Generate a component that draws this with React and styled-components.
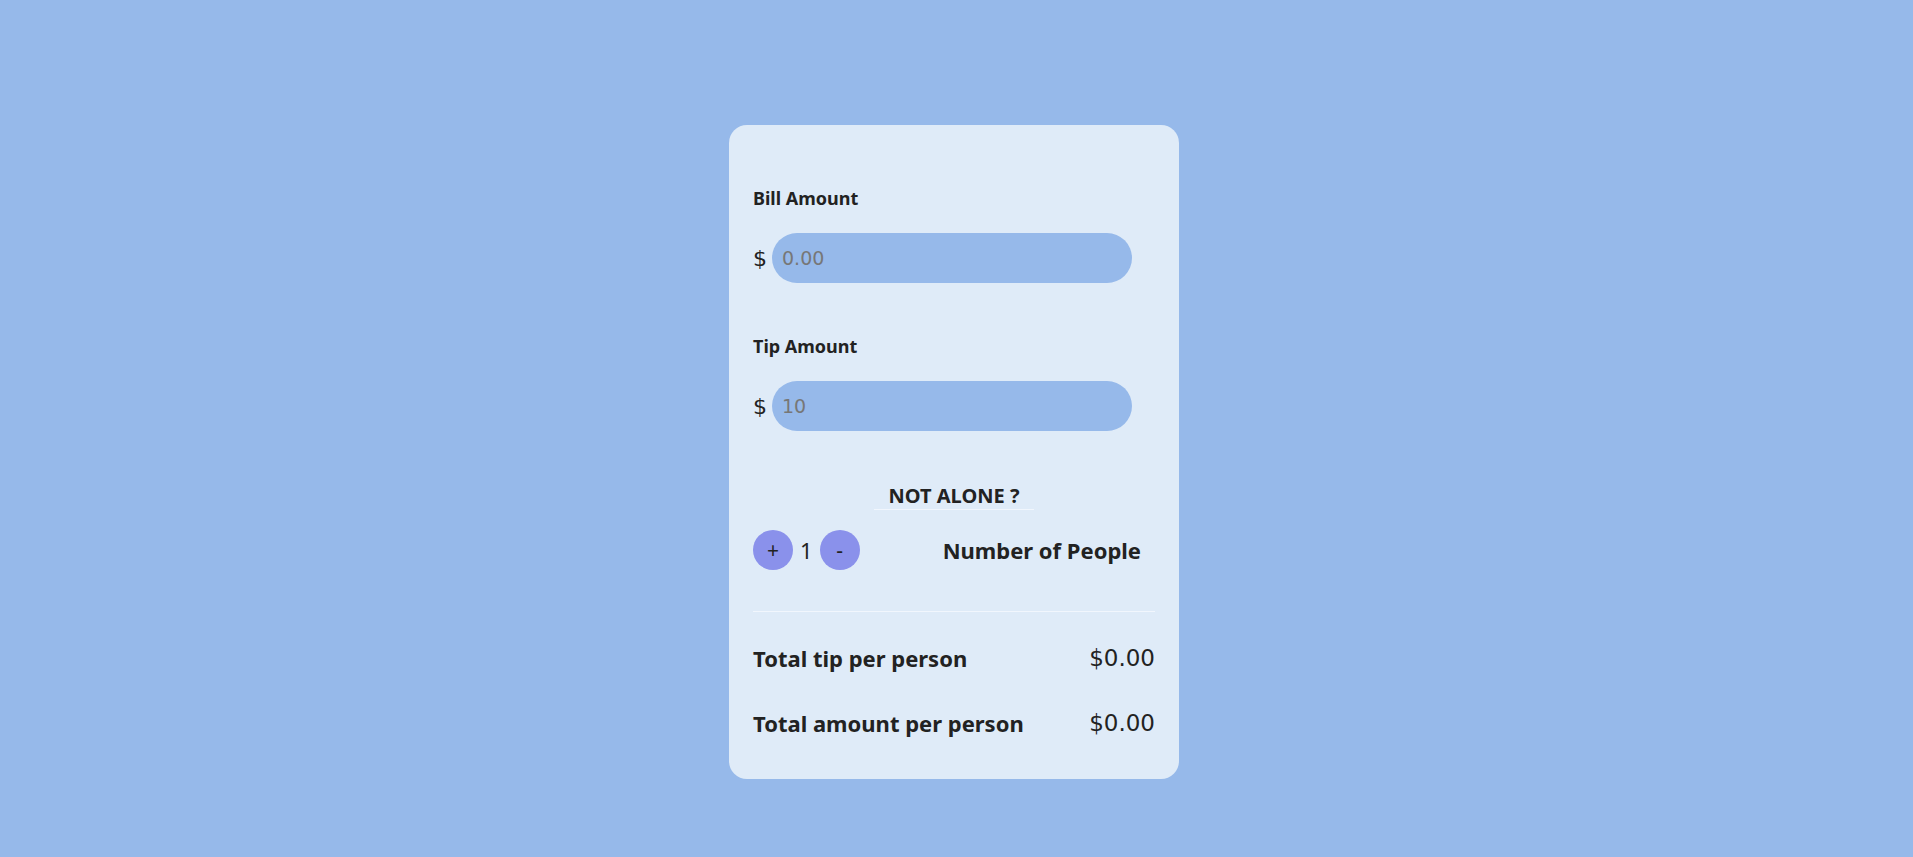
import { useState } from 'react';
import styled, { createGlobalStyle } from 'styled-components';

const GlobalStyle = createGlobalStyle`
  * {
    box-sizing: border-box;
  }

  html, body {
    margin: 0;
    padding: 0;
    min-height: 100%;
    background: #96b9ea;
    font-family: "Noto Sans", "Open Sans", sans-serif;
    color: #222;
  }
`;

// digits in the original render wider than the label font
const numberFont = `"DejaVu Sans", "Noto Sans", sans-serif`;

const Page = styled.main`
  min-height: 100vh;
  display: flex;
  justify-content: center;
  align-items: flex-start;
  padding: 125px 5px 0 0;
`;

const Card = styled.section`
  width: 450px;
  background: #dfebf8;
  border-radius: 18px;
  padding: 61px 24px 41px;
  display: flex;
  flex-direction: column;
`;

const Field = styled.div`
  display: flex;
  flex-direction: column;
  margin-bottom: 51px;
`;

const Label = styled.label`
  font-size: 18px;
  font-weight: 700;
  margin-bottom: 23px;
`;

const InputRow = styled.div`
  display: flex;
  align-items: center;
  gap: 5px;
`;

const Currency = styled.span`
  font-family: ${numberFont};
  font-size: 22px;
  width: 14px;
`;

const AmountInput = styled.input`
  width: 360px;
  height: 50px;
  border: none;
  outline: none;
  border-radius: 25px;
  background: #96b9ea;
  padding: 0 10px;
  font-family: ${numberFont};
  font-size: 19px;
  color: #222;

  &::placeholder {
    color: #777;
  }
`;

const SectionTitle = styled.h3`
  align-self: center;
  width: 160px;
  margin: 0 0 20px;
  text-align: center;
  font-size: 20px;
  font-weight: 700;
  border-bottom: 1px solid #f1f6fd;
`;

const PeopleRow = styled.div`
  display: flex;
  align-items: center;
  gap: 7px;
  padding-right: 14px;
  margin-bottom: 41px;
`;

const RoundButton = styled.button`
  width: 40px;
  height: 40px;
  border: none;
  border-radius: 50%;
  background: #8a91eb;
  color: #222;
  font-family: inherit;
  font-size: 21px;
  cursor: pointer;
  display: flex;
  align-items: center;
  justify-content: center;
  padding: 0;
`;

const Count = styled.span`
  font-size: 22px;
`;

const PeopleLabel = styled.span`
  margin-left: auto;
  font-size: 22px;
  font-weight: 700;
`;

const Divider = styled.hr`
  width: 100%;
  margin: 0 0 31px;
  border: none;
  border-top: 1px solid #f1f6fd;
`;

const TotalRow = styled.div`
  display: flex;
  justify-content: space-between;
  align-items: center;
  height: 30px;
  font-size: 22px;
  margin-bottom: ${({ $last }) => ($last ? '0' : '35px')};
`;

const TotalLabel = styled.span`
  font-weight: 700;
`;

const TotalValue = styled.span`
  font-family: ${numberFont};
  font-size: 23px;
  font-weight: 400;
`;

const App = () => {
  const [bill, setBill] = useState('');
  const [tip, setTip] = useState('');
  const [people, setPeople] = useState(1);

  const billNum = parseFloat(bill) || 0;
  const tipNum = parseFloat(tip) || 0;
  const tipPerPerson = billNum ? (billNum * tipNum) / 100 / people : 0;
  const totalPerPerson = billNum ? billNum / people + tipPerPerson : 0;

  return (
    <>
      <GlobalStyle />
      <Page>
        <Card>
          <Field>
            <Label htmlFor="bill">Bill Amount</Label>
            <InputRow>
              <Currency>$</Currency>
              <AmountInput
                id="bill"
                type="text"
                placeholder="0.00"
                value={bill}
                onChange={(e) => setBill(e.target.value)}
              />
            </InputRow>
          </Field>

          <Field>
            <Label htmlFor="tip">Tip Amount</Label>
            <InputRow>
              <Currency>$</Currency>
              <AmountInput
                id="tip"
                type="text"
                placeholder="10"
                value={tip}
                onChange={(e) => setTip(e.target.value)}
              />
            </InputRow>
          </Field>

          <SectionTitle>NOT ALONE ?</SectionTitle>
          <PeopleRow>
            <RoundButton onClick={() => setPeople((p) => p + 1)}>+</RoundButton>
            <Count>{people}</Count>
            <RoundButton onClick={() => setPeople((p) => Math.max(1, p - 1))}>-</RoundButton>
            <PeopleLabel>Number of People</PeopleLabel>
          </PeopleRow>

          <Divider />

          <TotalRow>
            <TotalLabel>Total tip per person</TotalLabel>
            <TotalValue>${tipPerPerson.toFixed(2)}</TotalValue>
          </TotalRow>
          <TotalRow $last>
            <TotalLabel>Total amount per person</TotalLabel>
            <TotalValue>${totalPerPerson.toFixed(2)}</TotalValue>
          </TotalRow>
        </Card>
      </Page>
    </>
  );
};

export default App;
